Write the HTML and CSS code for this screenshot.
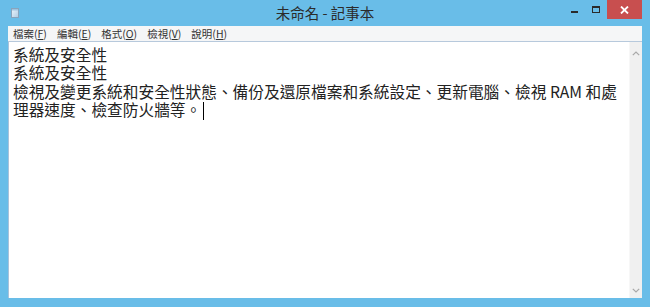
FILE: index.html
```html
<!DOCTYPE html>
<html lang="zh-Hant">
<head>
<meta charset="utf-8">
<title>未命名 - 記事本</title>
<link rel="stylesheet" href="styles.css">
</head>
<body>
<div class="window">
  <div class="titlebar">
    <div class="tb-left">
      <svg class="app-icon" width="8" height="10" viewBox="0 0 8 10">
        <defs>
          <linearGradient id="ig" x1="0" y1="0" x2="1" y2="1">
            <stop offset="0" stop-color="#eef6fc"/>
            <stop offset="1" stop-color="#aecbe3"/>
          </linearGradient>
        </defs>
        <rect x="0.5" y="0.5" width="7" height="9" fill="url(#ig)" stroke="#88a4bc"/>
        <rect x="1" y="1" width="6" height="1.5" fill="#9fc4e0"/>
      </svg>
    </div>
    <div class="title">未命名 - 記事本</div>
    <div class="controls">
      <div class="ctl ctl-min"><span class="min-glyph"></span></div>
      <div class="ctl ctl-max"><span class="max-glyph"></span></div>
      <div class="ctl ctl-close">
        <svg width="9" height="8" viewBox="0 0 9 8"><path d="M1 0.5 L8 7.5 M8 0.5 L1 7.5" stroke="#ffffff" stroke-width="1.8"/></svg>
      </div>
    </div>
  </div>
  <div class="menubar">
    <span class="menu-item">檔案(<u>F</u>)</span>
    <span class="menu-item">編輯(<u>E</u>)</span>
    <span class="menu-item">格式(<u>O</u>)</span>
    <span class="menu-item">檢視(<u>V</u>)</span>
    <span class="menu-item">說明(<u>H</u>)</span>
  </div>
  <div class="editor">
    <div class="text">
      <div class="line">系統及安全性</div>
      <div class="line">系統及安全性</div>
      <div class="line">檢視及變更系統和安全性狀態、備份及還原檔案和系統設定、更新電腦、檢視 RAM 和處</div>
      <div class="line">理器速度、檢查防火牆等。<span class="caret"></span></div>
    </div>
    <div class="scrollbar">
      <svg class="arrow" width="8" height="5" viewBox="0 0 8 5"><path d="M0.8 4.2 L4 1 L7.2 4.2" fill="none" stroke="#a8a8a8" stroke-width="1.2"/></svg>
      <svg class="arrow" width="8" height="5" viewBox="0 0 8 5"><path d="M0.8 0.8 L4 4 L7.2 0.8" fill="none" stroke="#a8a8a8" stroke-width="1.2"/></svg>
    </div>
  </div>
</div>
</body>
</html>
```

FILE: styles.css
```css
html, body {
  margin: 0;
  padding: 0;
}

body {
  width: 650px;
  height: 307px;
  overflow: hidden;
  font-family: "Noto Sans CJK TC", "Noto Sans", sans-serif;
}

.window {
  box-sizing: border-box;
  width: 650px;
  height: 307px;
  background: #69bde8;
  padding: 0 8px 9px 8px;
  display: flex;
  flex-direction: column;
}

.titlebar {
  height: 26px;
  display: grid;
  grid-template-columns: 1fr auto 1fr;
  align-items: start;
}

.tb-left {
  padding: 8px 0 0 3px;
  display: flex;
}

.app-icon {
  display: block;
}

.title {
  font-size: 14.5px;
  line-height: 25px;
  color: #2b2b2b;
  white-space: nowrap;
}

.controls {
  display: flex;
  justify-content: flex-end;
}

.ctl {
  width: 22px;
  height: 19px;
  display: flex;
  align-items: center;
  justify-content: center;
}

.min-glyph {
  display: block;
  width: 7px;
  height: 2px;
  background: #2a2a2a;
  margin-top: 4px;
}

.max-glyph {
  display: block;
  box-sizing: border-box;
  width: 8px;
  height: 7px;
  border: 1px solid #2a2a2a;
  border-top-width: 2px;
  margin-top: -1px;
}

.ctl-close {
  width: 35px;
  background: #c84f4f;
}

.ctl-close svg {
  display: block;
}

.menubar {
  height: 15px;
  background: #f5f6f7;
  border-bottom: 1px solid #b7c9dc;
  display: flex;
  align-items: center;
  gap: 10px;
  padding-left: 5px;
  font-size: 10.5px;
  line-height: 15px;
  color: #333333;
}

.menu-item {
  white-space: nowrap;
}

.menu-item u {
  text-decoration: underline;
  text-underline-offset: 1px;
}

.editor {
  flex: 1;
  min-height: 0;
  display: flex;
  background: #ffffff;
  border-left: 1px solid #a9c2da;
}

.text {
  flex: 1;
  padding: 4px 0 0 4px;
  font-size: 15.7px;
  line-height: 18.4px;
  color: #222222;
}

.line {
  white-space: pre;
  height: 18.4px;
}

.caret {
  display: inline-block;
  width: 1px;
  height: 18px;
  background: #000000;
  vertical-align: -4px;
  margin-left: 2px;
}

.scrollbar {
  width: 12px;
  background: #f0f0f0;
  border-left: 1px solid #f7f7f7;
  display: flex;
  flex-direction: column;
  justify-content: space-between;
  align-items: center;
  padding: 9px 0 5px 0;
}

.arrow {
  display: block;
}
```
